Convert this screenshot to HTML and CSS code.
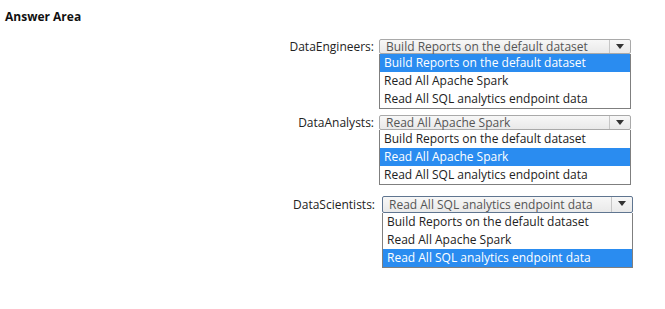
FILE: index.html
```html
<!DOCTYPE html>
<html lang="en">
<head>
    <meta charset="UTF-8">
    <meta name="viewport" content="width=device-width, initial-scale=1.0">
    <title>Answer Area</title>
    <link rel="stylesheet" href="styles.css">
</head>
<body>
    <h1 class="titulo">Answer Area</h1>
    <div class="moldura">
        <div class="grupo grupo-eng">
            <span class="rotulo">DataEngineers:</span>
            <div class="campo">
                <div class="caixa">
                    <span class="valor">Build Reports on the default dataset</span>
                    <span class="seta"></span>
                </div>
                <ul class="lista">
                    <li class="ativo">Build Reports on the default dataset</li>
                    <li>Read All Apache Spark</li>
                    <li>Read All SQL analytics endpoint data</li>
                </ul>
            </div>
        </div>
        <div class="grupo grupo-ana">
            <span class="rotulo">DataAnalysts:</span>
            <div class="campo">
                <div class="caixa">
                    <span class="valor">Read All Apache Spark</span>
                    <span class="seta"></span>
                </div>
                <ul class="lista">
                    <li>Build Reports on the default dataset</li>
                    <li class="ativo">Read All Apache Spark</li>
                    <li>Read All SQL analytics endpoint data</li>
                </ul>
            </div>
        </div>
        <div class="grupo grupo-sci">
            <span class="rotulo">DataScientists:</span>
            <div class="campo">
                <div class="caixa foco">
                    <span class="valor">Read All SQL analytics endpoint data</span>
                    <span class="seta"></span>
                </div>
                <ul class="lista">
                    <li>Build Reports on the default dataset</li>
                    <li>Read All Apache Spark</li>
                    <li class="ativo">Read All SQL analytics endpoint data</li>
                </ul>
            </div>
        </div>
    </div>
</body>
</html>
```

FILE: styles.css
```css
body {
    margin: 0;
    background: #fff;
    font-family: "Open Sans", Arial, sans-serif;
    color: #222;
}

.titulo {
    margin: 0;
    padding: 8px 0 0 5px;
    font-size: 12px;
    font-weight: bold;
    color: #111;
}

.moldura {
    margin-top: 14px;
}

.grupo {
    display: flex;
    align-items: flex-start;
}

.grupo-ana {
    margin-top: 6px;
}

.grupo-sci {
    margin-top: 11px;
}

.rotulo {
    width: 379px;
    padding-right: 5px;
    text-align: right;
    font-size: 12px;
    line-height: 15px;
    color: #222;
    box-sizing: border-box;
}

.grupo-sci .rotulo {
    width: 382px;
    padding-right: 7px;
    line-height: 17px;
}

.campo {
    width: 252px;
    font-size: 12px;
}

.grupo-sci .campo {
    width: 251px;
}

.caixa {
    display: flex;
    height: 15px;
    border: 1px solid #a9a9a9;
    border-radius: 2px;
    background: linear-gradient(#f7f7f7, #e9e9e9);
    box-sizing: border-box;
}

.caixa.foco {
    height: 17px;
    border-color: #5f7590;
}

.valor {
    flex: 1;
    padding-left: 6px;
    line-height: 13px;
    color: #555;
    white-space: nowrap;
}

.foco .valor {
    line-height: 15px;
}

.seta {
    width: 20px;
    border-left: 1px solid #c6c6c6;
    position: relative;
}

.seta::after {
    content: "";
    position: absolute;
    left: 6px;
    top: 4px;
    border-left: 4px solid transparent;
    border-right: 4px solid transparent;
    border-top: 5px solid #333;
}

.lista {
    list-style: none;
    margin: 0;
    padding: 0;
    border: 1px solid #7f7f7f;
    border-top: none;
    background: #fff;
}

.lista li {
    height: 18px;
    line-height: 18px;
    padding-left: 4px;
    color: #222;
    white-space: nowrap;
}

.lista li.ativo {
    background: #2a8cf0;
    color: #fff;
}
```
